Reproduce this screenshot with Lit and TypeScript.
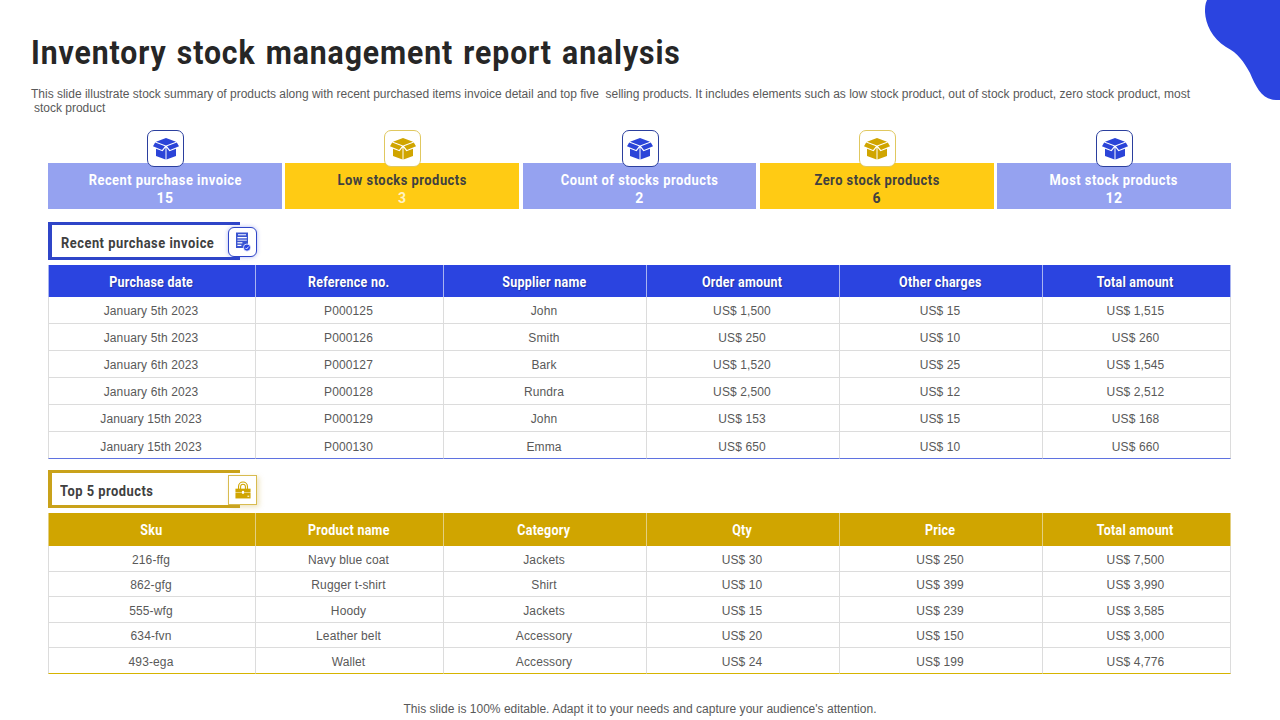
import { LitElement, html, css, svg } from "lit";
import { customElement } from "lit/decorators.js";

const boxIcon = svg`<svg class="box" viewBox="0 0 26 22" fill="currentColor">
  <path d="M13 0 L23 3.8 L13 7.6 L3 3.8 Z"/>
  <path d="M2.2 4.4 L12 8.3 L9 12 L0 8.2 Z"/>
  <path d="M23.8 4.4 L14 8.3 L17 12 L26 8.2 Z"/>
  <path d="M3 10.8 L9.6 13.2 L12.5 9.6 V21.6 L3 18 Z"/>
  <path d="M23 10.8 L16.4 13.2 L13.5 9.6 V21.6 L23 18 Z"/>
</svg>`;

const invoiceIcon = svg`<svg class="inv" viewBox="0 0 16 20">
  <path d="M1 0.5 H13 V16 H1 Z" fill="#3a54d0"/>
  <rect x="3" y="2" width="8" height="1.4" fill="#c9d2f7"/>
  <rect x="2.4" y="5" width="9.4" height="1.3" fill="#fff"/>
  <rect x="2.4" y="7.6" width="9.4" height="1.2" fill="#c9d2f7"/>
  <rect x="2.4" y="10.2" width="5" height="1.2" fill="#fff"/>
  <rect x="2.4" y="12.8" width="4" height="1.2" fill="#fff"/>
  <circle cx="12" cy="15.6" r="3.6" fill="#2b44e0" stroke="#fff" stroke-width="0.8"/>
  <path d="M10.4 15.8 L11.6 17 L13.6 14.6" fill="none" stroke="#fff" stroke-width="0.9"/>
</svg>`;

const lockIcon = svg`<svg class="lock" viewBox="0 0 18 20">
  <path d="M4 9 V6 A5 5 0 0 1 14 6 V9" fill="none" stroke="#d0a500" stroke-width="1.3"/>
  <path d="M6.3 9 V6.2 A2.7 2.7 0 0 1 11.7 6.2 V9" fill="none" stroke="#d0a500" stroke-width="1.2"/>
  <rect x="0.5" y="8.5" width="17" height="3.8" fill="#d0a500"/>
  <rect x="0.5" y="12.8" width="17" height="6.7" fill="#d0a500"/>
  <rect x="7.8" y="11" width="2.4" height="3.2" fill="#fff"/>
  <rect x="14" y="16.4" width="2" height="1.2" fill="#fff"/>
</svg>`;

const kpis = [
  { t: "Recent purchase invoice", n: "15", cls: "" },
  { t: "Low stocks products", n: "3", cls: "gold pale" },
  { t: "Count of stocks products", n: "2", cls: "" },
  { t: "Zero stock products", n: "6", cls: "gold" },
  { t: "Most stock products", n: "12", cls: "" },
];

const invHead = ["Purchase date", "Reference no.", "Supplier name", "Order amount", "Other charges", "Total amount"];
const invRows = [
  ["January 5th 2023", "P000125", "John", "US$ 1,500", "US$ 15", "US$ 1,515"],
  ["January 5th 2023", "P000126", "Smith", "US$ 250", "US$ 10", "US$ 260"],
  ["January 6th 2023", "P000127", "Bark", "US$ 1,520", "US$ 25", "US$ 1,545"],
  ["January 6th 2023", "P000128", "Rundra", "US$ 2,500", "US$ 12", "US$ 2,512"],
  ["January 15th 2023", "P000129", "John", "US$ 153", "US$ 15", "US$ 168"],
  ["January 15th 2023", "P000130", "Emma", "US$ 650", "US$ 10", "US$ 660"],
];
const topHead = ["Sku", "Product name", "Category", "Qty", "Price", "Total amount"];
const topRows = [
  ["216-ffg", "Navy blue coat", "Jackets", "US$ 30", "US$ 250", "US$ 7,500"],
  ["862-gfg", "Rugger t-shirt", "Shirt", "US$ 10", "US$ 399", "US$ 3,990"],
  ["555-wfg", "Hoody", "Jackets", "US$ 15", "US$ 239", "US$ 3,585"],
  ["634-fvn", "Leather belt", "Accessory", "US$ 20", "US$ 150", "US$ 3,000"],
  ["493-ega", "Wallet", "Accessory", "US$ 24", "US$ 199", "US$ 4,776"],
];

@customElement("app-root")
export class AppRoot extends LitElement {
  static styles = css`
    :host {
      display: block;
      position: relative;
      width: 1280px;
      height: 720px;
      overflow: hidden;
      background: #fff;
      font-family: "Liberation Sans", Arial, sans-serif;
      color: #595959;
    }
    .blob { position: absolute; top: 0; right: 0; width: 76px; height: 100px; }
    .head { padding: 33px 88px 0 31px; }
    h1 {
      margin: 0;
      font: 700 33.5px/40px Roboto, sans-serif;
      color: #262626;
      letter-spacing: 1.02px;
      word-spacing: 2px;
      white-space: nowrap;
      transform: scaleX(0.9);
      transform-origin: left top;
    }
    .sub {
      margin: 14px 0 0;
      font-size: 12px;
      line-height: 14px;
      color: #595959;
      letter-spacing: -0.01px;
    }
    .sub span { display: block; padding-left: 3px; }
    .main { margin: 48px 49px 0 48px; display: flex; flex-direction: column; }
    .kpis { display: grid; grid-template-columns: 234px 234px 233.5px 234px 234px; column-gap: 3.4px; height: 46px; }
    .sq { display: inline-block; transform: scaleX(0.92); white-space: nowrap; }
    .kpi {
      position: relative;
      background: #95a2f0;
      color: #fff;
      text-align: center;
      font: 700 14px/18px Roboto, sans-serif;
      letter-spacing: 0.55px;
      padding-top: 8px;
      box-sizing: border-box;
    }
    .kpi.gold { background: #ffcb14; color: #404040; }
    .kpi.pale .num { color: #fff3c4; }
    .badge {
      position: absolute;
      left: 50%;
      top: -33px;
      margin-left: -18px;
      width: 37px;
      height: 37px;
      box-sizing: border-box;
      background: #fff;
      border: 1px solid #2b3f9e;
      border-radius: 7px;
      color: #2b44d8;
      display: flex;
      align-items: center;
      justify-content: center;
    }
    .kpi.gold .badge { border-color: #e0c860; color: #d0a500; }
    .box { width: 26px; height: 22px; }
    .label {
      position: relative;
      width: 192px;
      height: 38px;
      box-sizing: border-box;
      border: solid #2f45c8;
      border-width: 3px 0 3px 4px;
      padding: 4px 0 0 9px;
      display: flex;
      align-items: center;
      font: 700 14px/18px Roboto, sans-serif;
      letter-spacing: 0.55px;
      color: #404040;
      margin-top: 13px;
    }
    .label.gold { border-color: #c9a21a; padding-left: 8px; margin-top: 11px; }
    .label .sq { transform-origin: left center; }
    .lab-ico {
      position: absolute;
      right: -17px;
      top: 2px;
      width: 29px;
      height: 30px;
      box-sizing: border-box;
      background: #fff;
      border: 1px solid #2f45c8;
      border-radius: 6px;
      box-shadow: 0 0 4px rgba(60, 80, 220, 0.4);
      display: flex;
      align-items: center;
      justify-content: center;
    }
    .label.gold .lab-ico {
      border-color: #d8bb50;
      border-radius: 0;
      box-shadow: 2px 2px 5px rgba(200, 170, 60, 0.35);
    }
    .inv { width: 16px; height: 20px; }
    .lock { width: 16px; height: 18px; }
    table {
      width: 1183px;
      border-collapse: separate;
      border-spacing: 0;
      table-layout: fixed;
      margin-top: 5px;
      font-size: 12px;
    }
    col:nth-child(1) { width: 208px; }
    col:nth-child(2) { width: 188px; }
    col:nth-child(3) { width: 203px; }
    col:nth-child(4) { width: 193px; }
    col:nth-child(5) { width: 203px; }
    col:nth-child(6) { width: 188px; }
    th {
      background: #2b44e0;
      color: #fff;
      font: 700 14px/18px Roboto, sans-serif;
      letter-spacing: 0.3px;
      height: 32px;
      padding: 2px 2px 0 0;
      border: solid #a9b4f0;
      border-width: 0 1px 0 0;
      box-sizing: border-box;
      text-shadow: 1px 1px 1px rgba(0, 0, 0, 0.25);
    }
    th .sq { transform: scaleX(0.89); }
    th:first-child, td:first-child { border-left-width: 1px; }
    td {
      text-align: center;
      padding: 2px 2px 0 0;
      height: 27px;
      border: solid #dcdcdc;
      border-width: 0 1px 1px 0;
      box-sizing: border-box;
      color: #595959;
      letter-spacing: 0.12px;
    }
    .blue-t tbody tr:last-child td { border-bottom-color: #5f72e0; padding-top: 4px; }
    .gold-t th { background: #d0a500; border-color: #e3cf80; height: 33px; padding-top: 0; text-shadow: none; }
    .gold-t td { height: 26px; padding-top: 3px; }
    .gold-t tr:nth-child(even) td { height: 25px; padding-top: 2px; }
    .gold-t tbody tr:last-child td { border-bottom-color: #d6b400; }
    .foot {
      margin: 28px 0 0;
      text-align: center;
      font-size: 12px;
      line-height: 14px;
      color: #595959;
      letter-spacing: 0.02px;
    }
  `;

  private table(head: string[], rows: string[][], cls: string) {
    return html`<table class=${cls}>
      <colgroup><col /><col /><col /><col /><col /><col /></colgroup>
      <thead><tr>${head.map((h) => html`<th><span class="sq">${h}</span></th>`)}</tr></thead>
      <tbody>${rows.map((r) => html`<tr>${r.map((c) => html`<td>${c}</td>`)}</tr>`)}</tbody>
    </table>`;
  }

  render() {
    return html`
      <svg class="blob" viewBox="0 0 76 100">
        <path fill="#2b44e0" d="M3 0 C1 4 1 8 1 12 C1.5 24 8 38 22 47 C34 53 40 62 46 73 C52 87 58 100 72 100 L76 100 V0 Z" />
      </svg>
      <header class="head">
        <h1>Inventory stock management report analysis</h1>
        <p class="sub">This slide illustrate stock summary of products along with recent purchased items invoice detail and top five&nbsp; selling products. It includes elements such as low stock product, out of stock product, zero stock product, most<span>stock product</span></p>
      </header>
      <div class="main">
        <div class="kpis">
          ${kpis.map(
            (k) => html`<div class="kpi ${k.cls}">
              <div class="badge">${boxIcon}</div>
              <div><span class="sq">${k.t}</span></div>
              <div class="num">${k.n}</div>
            </div>`
          )}
        </div>
        <div class="label"><span class="sq">Recent purchase invoice</span><div class="lab-ico">${invoiceIcon}</div></div>
        ${this.table(invHead, invRows, "blue-t")}
        <div class="label gold"><span class="sq">Top 5 products</span><div class="lab-ico">${lockIcon}</div></div>
        ${this.table(topHead, topRows, "gold-t")}
      </div>
      <p class="foot">This slide is 100% editable. Adapt it to your needs and capture your audience's attention.</p>
    `;
  }
}
